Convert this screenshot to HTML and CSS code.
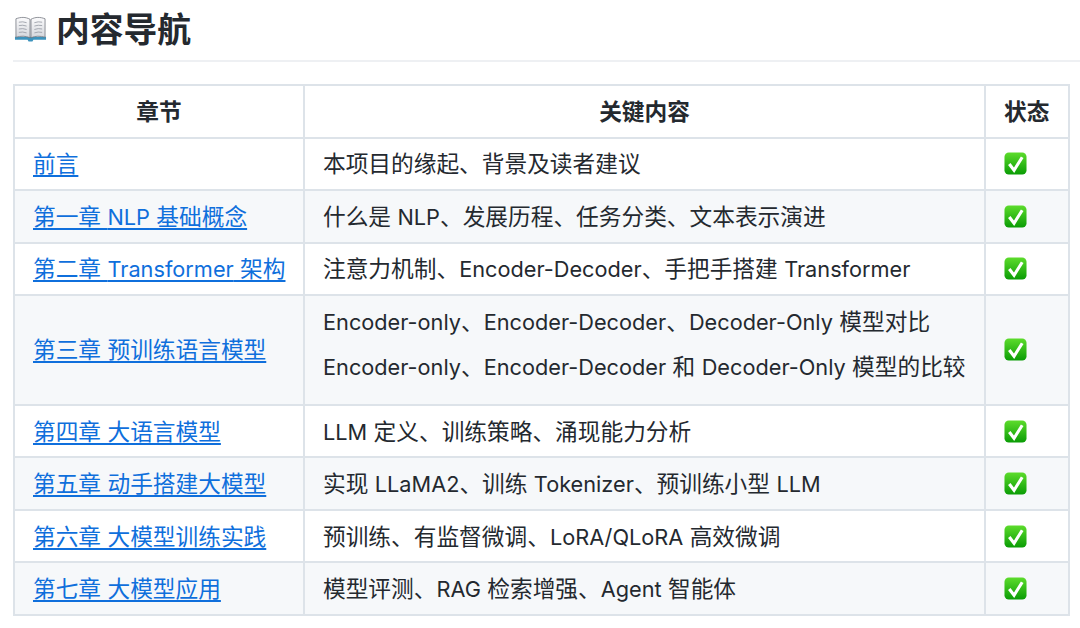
FILE: index.html
```html
<!DOCTYPE html>
<html lang="zh">
<head>
<meta charset="utf-8">
<title>内容导航</title>
<link rel="stylesheet" href="styles.css">
</head>
<body>
<svg class="defs" width="0" height="0" aria-hidden="true">
  <defs>
    <linearGradient id="g" x1="0" y1="0" x2="0" y2="1"><stop offset="0" stop-color="#5ddc2c"/><stop offset="1" stop-color="#0a9c05"/></linearGradient>
    <linearGradient id="p" x1="0" y1="0" x2="0" y2="1"><stop offset="0" stop-color="#fbfbfc"/><stop offset="1" stop-color="#d4d6dc"/></linearGradient>
    <symbol id="check" viewBox="0 0 24 24">
      <rect x="0.500" y="0.500" width="23" height="23" rx="4.500" fill="url(#g)"/>
      <path d="M5.500 12.500l5 6.500L19 5.500" fill="none" stroke="#fff" stroke-width="3.200"/>
    </symbol>
  </defs>
</svg>
<main class="page">
  <h2 class="title">
    <svg class="book" viewBox="0 0 34 26" aria-hidden="true">
      <path d="M1 21h32v3H20l-1 2h-4l-1-2H1z" fill="#3d93bd"/>
      <path d="M2 2.500C7 0.500 12 0.500 16.500 3v19C12 20 7 20 2 21.500z" fill="url(#p)" stroke="#70757e" stroke-width="0.800"/>
      <path d="M32 2.500C27 0.500 22 0.500 17.500 3v19C22 20 27 20 32 21.500z" fill="url(#p)" stroke="#70757e" stroke-width="0.800"/>
      <path d="M5 6q4-1 8 .5M5 9.500q4-1 8 .5M5 13q4-1 8 .5M5 16.500q4-1 8 .5M29 6q-4-1-8 .5M29 9.500q-4-1-8 .5M29 13q-4-1-8 .5M29 16.500q-4-1-8 .5" fill="none" stroke="#9a9ea8" stroke-width="0.900"/>
    </svg>
    <span>内容导航</span>
  </h2>
  <table class="nav">
    <colgroup><col class="c1"><col class="c2"><col class="c3"></colgroup>
    <thead>
      <tr><th>章节</th><th>关键内容</th><th>状态</th></tr>
    </thead>
    <tbody>
      <tr><td><a href="#">前言</a></td><td>本项目的缘起、背景及读者建议</td><td><svg class="ok"><use href="#check"/></svg></td></tr>
      <tr><td><a href="#">第一章 <span class="la">NLP</span> 基础概念</a></td><td>什么是 <span class="la">NLP</span>、发展历程、任务分类、文本表示演进</td><td><svg class="ok"><use href="#check"/></svg></td></tr>
      <tr><td><a href="#">第二章 <span class="la">Transformer</span> 架构</a></td><td>注意力机制、<span class="la">Encoder-Decoder</span>、手把手搭建 <span class="la">Transformer</span></td><td><svg class="ok"><use href="#check"/></svg></td></tr>
      <tr><td><a href="#">第三章 预训练语言模型</a></td><td class="multi"><span class="la">Encoder-only</span>、<span class="la">Encoder-Decoder</span>、<span class="la">Decoder-Only</span> 模型对比<br><span class="la">Encoder-only</span>、<span class="la">Encoder-Decoder</span> 和 <span class="la">Decoder-Only</span> 模型的比较</td><td><svg class="ok"><use href="#check"/></svg></td></tr>
      <tr><td><a href="#">第四章 大语言模型</a></td><td><span class="la">LLM</span> 定义、训练策略、涌现能力分析</td><td><svg class="ok"><use href="#check"/></svg></td></tr>
      <tr><td><a href="#">第五章 动手搭建大模型</a></td><td>实现 <span class="la">LLaMA2</span>、训练 <span class="la">Tokenizer</span>、预训练小型 <span class="la">LLM</span></td><td><svg class="ok"><use href="#check"/></svg></td></tr>
      <tr><td><a href="#">第六章 大模型训练实践</a></td><td>预训练、有监督微调、<span class="la">LoRA/QLoRA</span> 高效微调</td><td><svg class="ok"><use href="#check"/></svg></td></tr>
      <tr><td><a href="#">第七章 大模型应用</a></td><td>模型评测、<span class="la">RAG</span> 检索增强、<span class="la">Agent</span> 智能体</td><td><svg class="ok"><use href="#check"/></svg></td></tr>
    </tbody>
  </table>
</main>
</body>
</html>
```

FILE: styles.css
```css
* { box-sizing: border-box; }
html, body { margin: 0; background: #fff; }
body {
  color: #24292f;
  font-family: Inter, "Noto Sans CJK SC", sans-serif;
  font-size: 22.7px;
  overflow: hidden;
}
.defs { display: block; height: 0; }
.page { padding: 0 0 0 13px; }
.title {
  display: flex;
  align-items: center;
  gap: 8px;
  height: 62px;
  margin: 0 0 22px;
  border-bottom: 2px solid #eef0f3;
  font-size: 33.75px;
  font-weight: 700;
  line-height: 60px;
}
.book { width: 33px; height: 26px; margin: 0 1px 2px 1px; }
.nav {
  border-collapse: collapse;
  width: 1055px;
  table-layout: fixed;
}
.c1 { width: 290px; }
.c2 { width: 681px; }
.c3 { width: 84px; }
th, td {
  border: 2px solid #dde3e9;
  padding: 2.75px 18px;
  line-height: 45px;
  text-align: left;
  font-weight: 400;
  white-space: nowrap;
}
th { font-weight: 700; text-align: center; }
th:last-child { padding-right: 20px; }
td.multi { padding-bottom: 15px; }
tbody tr { background: #fff; }
tbody tr:nth-child(even) { background: #f6f8fa; }
.la { font-size: 21.72px; line-height: 1; }
a {
  color: #0f6fdc;
  text-decoration: underline;
  text-decoration-thickness: 2px;
  text-decoration-skip-ink: none;
  text-underline-offset: 3px;
}
.ok { display: block; width: 23px; height: 23px; }
```
